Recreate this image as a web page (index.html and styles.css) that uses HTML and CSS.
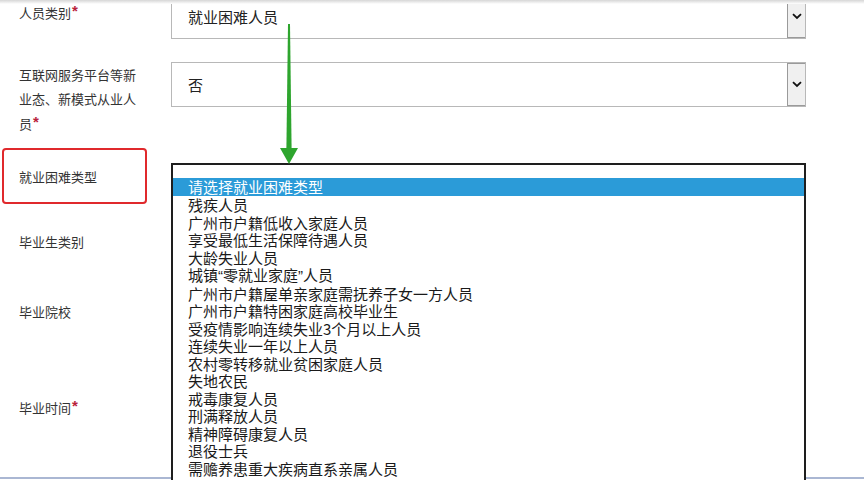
FILE: index.html
```html
<!DOCTYPE html>
<html lang="zh-CN">
<head>
<meta charset="utf-8">
<title>就业困难类型</title>
<link rel="stylesheet" href="styles.css">
</head>
<body>
<div class="page">
  <div class="topshade"></div>
  <div class="form">
    <div class="row row-first">
      <div class="label label-first">人员类别<span class="req">*</span></div>
      <div class="select">
        <div class="select-value">就业困难人员</div>
        <div class="select-btn"><svg width="10" height="7" viewBox="0 0 10 7"><path d="M1 1.2 L5 5 L9 1.2" fill="none" stroke="#111" stroke-width="1.8"/></svg></div>
      </div>
    </div>
    <div class="row row-second">
      <div class="label label-multi">互联网服务平台等新<br>业态、新模式从业人<br>员<span class="req">*</span></div>
      <div class="select">
        <div class="select-value">否</div>
        <div class="select-btn"><svg width="10" height="7" viewBox="0 0 10 7"><path d="M1 1.2 L5 5 L9 1.2" fill="none" stroke="#111" stroke-width="1.8"/></svg></div>
      </div>
    </div>
    <div class="row row-mark">
      <div class="mark"><span class="label-text">就业困难类型</span></div>
    </div>
    <div class="row row-h76"><div class="label">毕业生类别</div></div>
    <div class="row row-h64"><div class="label">毕业院校</div></div>
    <div class="row row-h126"><div class="label">毕业时间<span class="req">*</span></div></div>
    <div class="bottomline"></div>
  </div>

  <ul class="listbox">
    <li class="opt selected">请选择就业困难类型</li>
    <li class="opt">残疾人员</li>
    <li class="opt">广州市户籍低收入家庭人员</li>
    <li class="opt">享受最低生活保障待遇人员</li>
    <li class="opt">大龄失业人员</li>
    <li class="opt">城镇<span class="q">“</span>零就业家庭<span class="q">”</span>人员</li>
    <li class="opt">广州市户籍屋单亲家庭需抚养子女一方人员</li>
    <li class="opt">广州市户籍特困家庭高校毕业生</li>
    <li class="opt">受疫情影响连续失业3个月以上人员</li>
    <li class="opt">连续失业一年以上人员</li>
    <li class="opt">农村零转移就业贫困家庭人员</li>
    <li class="opt">失地农民</li>
    <li class="opt">戒毒康复人员</li>
    <li class="opt">刑满释放人员</li>
    <li class="opt">精神障碍康复人员</li>
    <li class="opt">退役士兵</li>
    <li class="opt">需赡养患重大疾病直系亲属人员</li>
  </ul>

  <svg class="arrow" width="20" height="142" viewBox="0 0 20 142">
    <polygon points="8,0 10,0 11.6,124 6.4,124" fill="#2ea52e"/>
    <polygon points="0,124 18,124 9,140" fill="#2ea52e"/>
  </svg>
</div>
</body>
</html>
```

FILE: styles.css
```css
html, body {
  margin: 0;
  padding: 0;
  background: #ffffff;
  overflow: hidden;
}

.page {
  position: relative;
  width: 864px;
  height: 480px;
  overflow: hidden;
  font-family: "Microsoft YaHei", "Noto Sans CJK SC", "Noto Sans", sans-serif;
  color: #333;
}

.topshade {
  position: absolute;
  left: 0;
  top: 0;
  width: 864px;
  height: 4px;
  background: linear-gradient(#d6d6d6, #ffffff);
  z-index: 5;
}

.form {
  margin-top: -6px;
}

.row {
  display: flex;
  align-items: flex-start;
}

.row-first {
  height: 45px;
  margin-bottom: 23px;
}

.row-second {
  height: 86px;
}

.row-mark {
  height: 56px;
}

.row-h76, .row-h64, .row-h126 {
  align-items: center;
}
.row-h76 { height: 76px; }
.row-h64 { height: 64px; }
.row-h126 { height: 126px; }

.label {
  width: 171px;
  box-sizing: border-box;
  padding-left: 19px;
  font-size: 13px;
  line-height: 22px;
  color: #333;
}

.label-first {
  padding-top: 6px;
}

.label-multi {
  padding-top: 1px;
  line-height: 23.5px;
}

.req {
  color: #b9223b;
  font-weight: bold;
  font-size: 15px;
  font-family: "Liberation Sans", sans-serif;
  vertical-align: 2px;
  margin-left: 1px;
}

.mark {
  margin-left: 2px;
  width: 145px;
  height: 56px;
  box-sizing: border-box;
  border: 2px solid #e0292c;
  border-radius: 4px;
  display: flex;
  align-items: center;
  padding-left: 15px;
  font-size: 13px;
  color: #333;
}

.select {
  width: 635px;
  height: 45px;
  box-sizing: border-box;
  border: 1px solid #b8b8b8;
  display: flex;
  background: #fff;
}

.select-value {
  flex: 1;
  padding-left: 16px;
  font-size: 15px;
  color: #222;
  display: flex;
  align-items: center;
}

.select-btn {
  width: 18px;
  box-sizing: border-box;
  border: 1px solid #9a9a9a;
  border-right: none;
  background: #f0f0f0;
  display: flex;
  align-items: center;
  justify-content: center;
}

.bottomline {
  margin-top: 7px;
  height: 2px;
  background: #aab7d3;
}

.listbox {
  position: absolute;
  left: 171px;
  top: 163px;
  width: 635px;
  height: 330px;
  box-sizing: border-box;
  margin: 0;
  padding: 13px 0 0 0;
  list-style: none;
  background: #fff;
  border: 2px solid #1e1e1e;
  z-index: 3;
}

.opt {
  padding-left: 15px;
  font-size: 15px;
  line-height: 17.5px;
  color: #1a1a1a;
  white-space: nowrap;
}

.opt .q {
  font-family: "Liberation Sans", sans-serif;
}

.opt.selected {
  background: #2b9bd8;
  color: #ffffff;
  height: 18px;
}

.arrow {
  position: absolute;
  left: 280px;
  top: 24px;
  z-index: 4;
}
```
